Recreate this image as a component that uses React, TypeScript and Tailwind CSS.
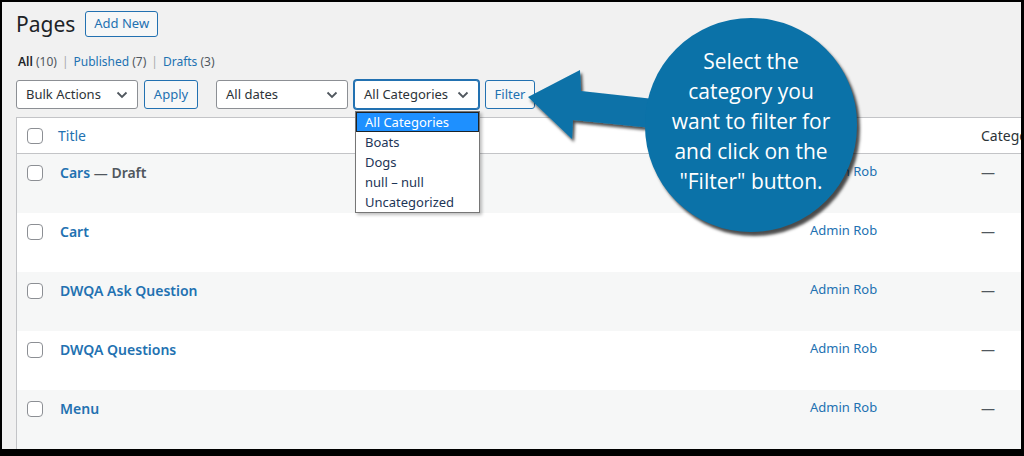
import React from 'react';

const rows = [
  { title: 'Cars', suffix: ' — Draft', alt: true },
  { title: 'Cart', alt: false },
  { title: 'DWQA Ask Question', alt: true },
  { title: 'DWQA Questions', alt: false },
  { title: 'Menu', alt: true },
];

function Chevron() {
  return (
    <svg width="12" height="8" viewBox="0 0 12 8" className="shrink-0">
      <polyline points="1.5,1.5 6,6 10.5,1.5" fill="none" stroke="#50575e" strokeWidth="1.8" />
    </svg>
  );
}

function Select({ label, width, focused }: { label: string; width: string; focused?: boolean }) {
  return (
    <div
      className={`${width} h-[29px] bg-white rounded-[3px] flex items-center justify-between pl-[9px] pr-[9px] text-[13px] text-[#2c3338] border ${
        focused ? 'border-[#2271b1] shadow-[0_0_0_1px_#2271b1]' : 'border-[#8c8f94]'
      }`}
    >
      <span>{label}</span>
      <Chevron />
    </div>
  );
}

function Checkbox() {
  return <div className="w-4 h-4 rounded-[4px] border border-[#8c8f94] bg-white" />;
}

export default function App() {
  return (
    <div className="w-[1024px] h-[456px] bg-black pt-[2px] pl-[2px] pr-[3px] pb-[7px] font-['Noto_Sans',sans-serif]">
      <div className="relative w-full h-full bg-[#f1f1f1] overflow-hidden">
        {/* Heading */}
        <div className="flex items-center gap-[10px] pl-[14px] pt-[8px]">
          <h1 className="text-[21px] leading-[28px] text-[#1d2327]">Pages</h1>
          <div className="h-[26px] px-[8px] border border-[#2271b1] rounded-[3px] bg-[#f6f7f7] text-[#2271b1] text-[13px] flex items-center">
            Add New
          </div>
        </div>

        {/* Subsubsub */}
        <div className="pl-[16px] mt-[15px] text-[12px] leading-[18px] text-[#50575e] flex gap-[5px]">
          <span><span className="text-[#1d2327] font-semibold">All</span> (10)</span>
          <span className="text-[#a7aaad]">|</span>
          <span><span className="text-[#2271b1]">Published</span> (7)</span>
          <span className="text-[#a7aaad]">|</span>
          <span><span className="text-[#2271b1]">Drafts</span> (3)</span>
        </div>

        {/* Filters */}
        <div className="flex items-center pl-[14px] mt-[9px]">
          <Select label="Bulk Actions" width="w-[122px]" />
          <div className="ml-[6px] h-[29px] w-[54px] border border-[#2271b1] rounded-[3px] bg-[#f6f7f7] text-[#2271b1] text-[13px] flex items-center justify-center">
            Apply
          </div>
          <div className="ml-[18px]">
            <Select label="All dates" width="w-[132px]" />
          </div>
          <div className="ml-[6px]">
            <Select label="All Categories" width="w-[125px]" focused />
          </div>
          <div className="ml-[6px] h-[29px] w-[50px] border border-[#2271b1] rounded-[3px] bg-[#f6f7f7] text-[#2271b1] text-[13px] flex items-center justify-center">
            Filter
          </div>
        </div>

        {/* Table */}
        <div className="ml-[14px] mt-[8px] border-l border-t border-[#c3c4c7] bg-white">
          <div className="grid grid-cols-[41px_752px_171px_1fr] h-[36px] items-center border-b border-[#c3c4c7] text-[14px]">
            <div className="pl-[10px]"><Checkbox /></div>
            <div className="text-[#2271b1]">Title</div>
            <div />
            <div className="text-[#2c3338]">Categories</div>
          </div>
          {rows.map((r) => (
            <div
              key={r.title}
              className={`grid grid-cols-[41px_752px_171px_1fr] h-[59px] items-start pt-[8px] text-[14px] ${
                r.alt ? 'bg-[#f6f7f7]' : 'bg-white'
              }`}
            >
              <div className="pl-[10px] pt-[3px]"><Checkbox /></div>
              <div className="pl-[2px] font-semibold">
                <span className="text-[#2271b1]">{r.title}</span>
                {r.suffix && <span className="text-[#50575e]">{r.suffix}</span>}
              </div>
              <div className="text-[#2271b1] text-[13px]">Admin Rob</div>
              <div className="text-[#50575e]">—</div>
            </div>
          ))}
        </div>

        {/* Open dropdown */}
        <div className="absolute left-[353px] top-[109px] w-[125px] bg-white border border-[#767676] shadow-[2px_2px_3px_rgba(0,0,0,0.25)] text-[13px] text-[#1d3557]">
          <div className="h-[20px] leading-[18px] pl-[8px] bg-[#1e90ff] text-white border border-[#1d2327]">All Categories</div>
          <div className="h-[20px] leading-[20px] pl-[9px]">Boats</div>
          <div className="h-[20px] leading-[20px] pl-[9px]">Dogs</div>
          <div className="h-[20px] leading-[20px] pl-[9px]">null – null</div>
          <div className="h-[20px] leading-[20px] pl-[9px]">Uncategorized</div>
        </div>

        {/* Arrow */}
        <svg className="absolute left-0 top-0 pointer-events-none" width="1019" height="447">
          <defs>
            <filter id="sh" x="-20%" y="-20%" width="140%" height="140%">
              <feDropShadow dx="2" dy="3" stdDeviation="1.5" floodColor="#000" floodOpacity="0.7" />
            </filter>
          </defs>
          <polygon
            points="526,95 578,68 579,89 670,99 670,128 571,118 570,137"
            fill="#0b72a8"
            filter="url(#sh)"
          />
        </svg>

        {/* Callout */}
        <div className="absolute left-[643px] top-[16px] w-[212px] h-[214px] rounded-full bg-[#0b72a8] shadow-[3px_4px_3px_rgba(0,0,0,0.7)] flex flex-col items-center justify-center pb-[9px] text-white text-[21px] leading-[30px] font-['Open_Sans',sans-serif] text-center">
          <div>Select the</div>
          <div>category you</div>
          <div>want to filter for</div>
          <div>and click on the</div>
          <div>"Filter" button.</div>
        </div>
      </div>
    </div>
  );
}
